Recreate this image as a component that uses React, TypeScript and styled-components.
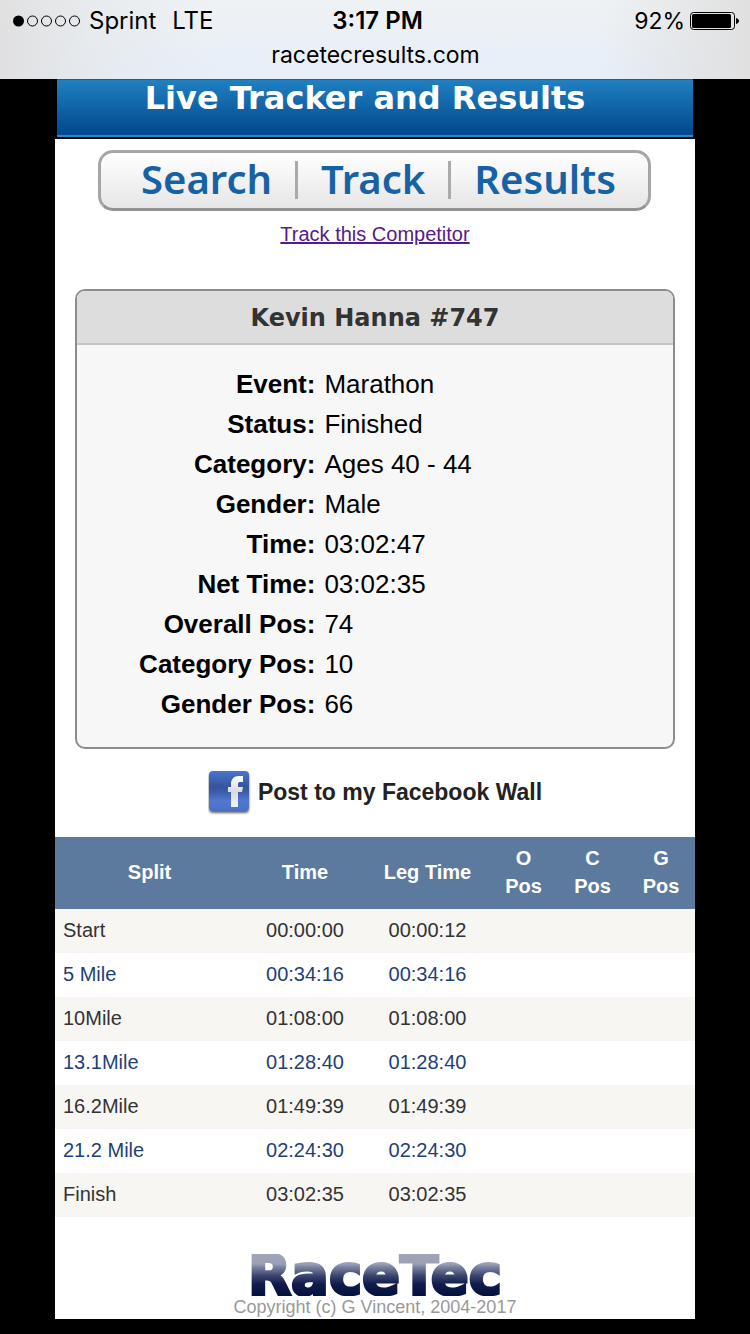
import React from "react";
import styled, { createGlobalStyle } from "styled-components";

const GlobalStyle = createGlobalStyle`
  * { box-sizing: border-box; }
  body {
    margin: 0;
    background: #000;
    font-family: "Liberation Sans", Arial, sans-serif;
  }
`;

const BrowserBar = styled.header`
  height: 79px;
  padding: 4px 11px 0 12px;
  background: linear-gradient(90deg, #e0e0e1 0%, rgba(228, 231, 233, 0.6) 12%, rgba(230, 238, 248, 0) 28%, rgba(230, 238, 248, 0) 80%, #e0e0e0 100%),
    linear-gradient(#eff2f4, #e6eef8);
  color: #000;
  font-family: Inter, sans-serif;
  font-size: 24px;
`;

const StatusRow = styled.div`
  display: grid;
  grid-template-columns: 1fr auto 1fr;
  align-items: center;
  height: 34px;
  line-height: 34px;
`;

const Carrier = styled.div`
  display: flex;
  align-items: center;
  gap: 8px;
`;

const Network = styled.span`
  padding-left: 8px;
`;

const Clock = styled.time`
  padding-left: 4px;
  font-weight: 600;
`;

const Battery = styled.div`
  display: flex;
  align-items: center;
  justify-content: flex-end;
  gap: 5px;
  font-size: 23px;
`;

const Address = styled.div`
  height: 34px;
  line-height: 34px;
  text-align: center;
  font-size: 23px;
`;

const Page = styled.div`
  max-width: 640px;
  margin: 0 auto 15px;
`;

const Banner = styled.div`
  height: 60px;
  margin: 0 2px;
  padding-right: 20px;
  border-top: 1px solid #1a608f;
  border-bottom: 2px solid #000;
  background: linear-gradient(#2080c2, #034a90 94%) top / 100% 55px no-repeat, #2389d0;
  text-align: center;
`;

const BannerTitle = styled.h1`
  margin: 0;
  color: #fff;
  font: bold 32px/36px "DejaVu Sans", Verdana, sans-serif;
`;

const Content = styled.main`
  padding-top: 11px;
  background: #fff;
`;

const Tabs = styled.nav`
  display: flex;
  justify-content: center;
  height: 61px;
  margin: 0 44px 0 43px;
  padding: 8px 0 9px 8px;
  border: 3px solid #a6a6a6;
  border-bottom-color: #929292;
  border-radius: 15px;
  background: linear-gradient(#fff, #e6e6e6);
`;

const Tab = styled.a`
  padding: 0 23px;
  color: #1762a5;
  font: 600 40px/36px "Noto Sans", "Open Sans", sans-serif;
  text-decoration: none;
  & + & { border-left: 3px solid #aaa; }
`;

const TrackLine = styled.p`
  margin: 10px 0 41px;
  text-align: center;
  font-size: 20px;
  line-height: 27px;
`;

const TrackLink = styled.a`
  color: #551a8b;
`;

const Card = styled.section`
  margin: 0 20px;
  border: 2px solid #8d8d8d;
  border-radius: 10px;
  background: #f7f7f7;
  overflow: hidden;
`;

const CardTitle = styled.h2`
  margin: 0;
  padding-top: 2px;
  border-bottom: 2px solid #c5c5c5;
  background: #ddd;
  color: #333;
  text-align: center;
  font: bold 24px/50px "DejaVu Sans", Verdana, sans-serif;
`;

const Details = styled.dl`
  display: grid;
  grid-template-columns: 40% 1fr;
  column-gap: 9px;
  margin: 0;
  padding: 19px 0 23px;
  color: #000;
  font-size: 26px;
  line-height: 40px;
`;

const Label = styled.dt`
  font-weight: bold;
  text-align: right;
`;

const Value = styled.dd`
  margin: 0;
`;

const ShareLine = styled.div`
  display: flex;
  justify-content: center;
  padding: 20px 0 22px;
`;

const ShareLink = styled.a`
  display: flex;
  align-items: center;
  gap: 7px;
  color: #222;
  font-size: 23px;
  font-weight: bold;
  line-height: 46px;
  text-decoration: none;
`;

const Splits = styled.table`
  width: 100%;
  table-layout: fixed;
  border-collapse: collapse;
  font-size: 20px;
  line-height: 28px;
`;

const HeadCell = styled.th<{ $width?: number }>`
  width: ${(p) => (p.$width ? `${p.$width}px` : "auto")};
  padding: 7px 8px 9px;
  background: #5c7a9e;
  color: #fff;
`;

const Row = styled.tr`
  color: #333;
  background: #f7f6f3;
  &:nth-child(even) {
    color: #1f3f78;
    background: #fff;
  }
`;

const Cell = styled.td`
  padding: 7px 8px 9px;
  text-align: center;
  &:first-child { text-align: left; }
`;

const Footer = styled.footer`
  padding-top: 37px;
  text-align: center;
  color: #999;
  font-size: 18px;
  line-height: 23px;
`;

const Logo = styled.div`
  height: 42px;
  font: bold 56px/40px "DejaVu Sans", Verdana, sans-serif;
`;

const LogoText = styled.span`
  display: inline-block;
  padding: 1px 2px;
  background: linear-gradient(#a0a5b9 0, #9ba0b6 24%, #8087a4 30%, #3b446f 52%, #101b4c 72%, #03103f 100%);
  background-clip: text;
  -webkit-background-clip: text;
  color: transparent;
  -webkit-text-stroke: 3px transparent;
`;

const details = [
  ["Event", "Marathon"],
  ["Status", "Finished"],
  ["Category", "Ages 40 - 44"],
  ["Gender", "Male"],
  ["Time", "03:02:47"],
  ["Net Time", "03:02:35"],
  ["Overall Pos", "74"],
  ["Category Pos", "10"],
  ["Gender Pos", "66"],
];

const splits = [
  ["Start", "00:00:00", "00:00:12"],
  ["5 Mile", "00:34:16", "00:34:16"],
  ["10Mile", "01:08:00", "01:08:00"],
  ["13.1Mile", "01:28:40", "01:28:40"],
  ["16.2Mile", "01:49:39", "01:49:39"],
  ["21.2 Mile", "02:24:30", "02:24:30"],
  ["Finish", "03:02:35", "03:02:35"],
];

const SignalDots = () => (
  <svg width="69" height="14" viewBox="0 0 69 14" aria-hidden="true">
    <circle cx="6.5" cy="7" r="5.5" />
    {[20.5, 34.5, 48.5, 62.5].map((x) => (
      <circle key={x} cx={x} cy="7" r="5" fill="none" stroke="#000" />
    ))}
  </svg>
);

const BatteryIcon = () => (
  <svg width="49" height="20" viewBox="0 0 49 20" aria-hidden="true">
    <rect x="0.5" y="1.5" width="44" height="17" rx="3" fill="none" stroke="#000" />
    <rect x="2" y="3" width="39" height="14" rx="1.5" />
    <path d="M46 7c4 1 4 5 0 6z" />
  </svg>
);

const FacebookIcon = () => (
  <svg width="43" height="46" viewBox="0 0 43 46" aria-hidden="true">
    <defs>
      <linearGradient id="fbTile" x1="0" y1="0" x2="0" y2="1">
        <stop offset="0" stopColor="#4a75cf" />
        <stop offset="0.4" stopColor="#37539a" />
        <stop offset="0.55" stopColor="#3f60b0" />
        <stop offset="0.75" stopColor="#5078d2" />
        <stop offset="1" stopColor="#4a70c4" />
      </linearGradient>
      <linearGradient id="fbMark" x1="0" y1="0" x2="0" y2="1">
        <stop offset="0" stopColor="#fff" />
        <stop offset="0.5" stopColor="#d8dade" />
        <stop offset="1" stopColor="#f4f4f6" />
      </linearGradient>
      <filter id="fbShadow" x="-20%" y="-20%" width="140%" height="150%">
        <feDropShadow dx="0" dy="2" stdDeviation="1.2" floodColor="#222" floodOpacity="0.7" />
      </filter>
    </defs>
    <rect x="1" y="2" width="40" height="40" rx="4" fill="url(#fbTile)" filter="url(#fbShadow)" />
    <path
      d="M23 38V23h-3v-5h3v-3c0-5 3-8 8-8h4v6h-3c-2 0-2 1-2 3v2h5l-1 5h-4v15z"
      fill="url(#fbMark)"
    />
  </svg>
);

export default function App() {
  return (
    <>
      <GlobalStyle />
      <BrowserBar>
        <StatusRow>
          <Carrier>
            <SignalDots />
            <span>Sprint</span>
            <Network>LTE</Network>
          </Carrier>
          <Clock>3:17 PM</Clock>
          <Battery>
            <span>92%</span>
            <BatteryIcon />
          </Battery>
        </StatusRow>
        <Address>racetecresults.com</Address>
      </BrowserBar>
      <Page>
        <Banner>
          <BannerTitle>Live Tracker and Results</BannerTitle>
        </Banner>
        <Content>
          <Tabs>
            <Tab href="#search">Search</Tab>
            <Tab href="#track">Track</Tab>
            <Tab href="#results">Results</Tab>
          </Tabs>
          <TrackLine>
            <TrackLink href="#competitor">Track this Competitor</TrackLink>
          </TrackLine>
          <Card>
            <CardTitle>Kevin Hanna #747</CardTitle>
            <Details>
              {details.map(([label, value]) => (
                <React.Fragment key={label}>
                  <Label>{label}:</Label>
                  <Value>{value}</Value>
                </React.Fragment>
              ))}
            </Details>
          </Card>
          <ShareLine>
            <ShareLink href="#share">
              <FacebookIcon />
              Post to my Facebook Wall
            </ShareLink>
          </ShareLine>
          <Splits>
            <thead>
              <tr>
                <HeadCell scope="col">Split</HeadCell>
                <HeadCell scope="col" $width={122}>Time</HeadCell>
                <HeadCell scope="col" $width={123}>Leg Time</HeadCell>
                <HeadCell scope="col" $width={69}>O Pos</HeadCell>
                <HeadCell scope="col" $width={69}>C Pos</HeadCell>
                <HeadCell scope="col" $width={68}>G Pos</HeadCell>
              </tr>
            </thead>
            <tbody>
              {splits.map(([name, time, leg]) => (
                <Row key={name}>
                  <Cell>{name}</Cell>
                  <Cell>{time}</Cell>
                  <Cell>{leg}</Cell>
                  <Cell />
                  <Cell />
                  <Cell />
                </Row>
              ))}
            </tbody>
          </Splits>
          <Footer>
            <Logo>
              <LogoText>RaceTec</LogoText>
            </Logo>
            Copyright (c) G Vincent, 2004-2017
          </Footer>
        </Content>
      </Page>
    </>
  );
}
